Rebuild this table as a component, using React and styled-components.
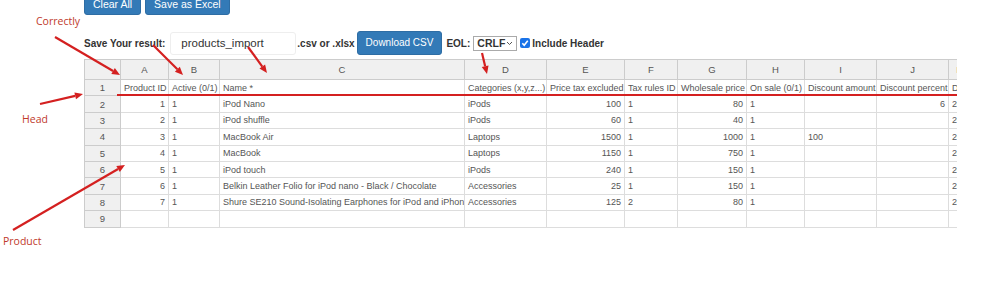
import React from 'react';
import styled, { createGlobalStyle } from 'styled-components';

const GlobalStyle = createGlobalStyle`
  html, body {
    margin: 0;
    padding: 0;
    background: #fff;
  }
  body {
    font-family: "Liberation Sans", Arial, sans-serif;
    color: #333;
  }
`;

const Page = styled.div`
  position: relative;
  width: 1000px;
  height: 293px;
  overflow: hidden;
`;

const Content = styled.div`
  display: flex;
  flex-direction: column;
  padding-left: 84px;
  margin-top: -7px;
`;

const TopBar = styled.div`
  display: flex;
  gap: 4px;
`;

const Button = styled.button`
  background: #337ab7;
  border: 1px solid #2e6da4;
  border-radius: 3px;
  color: #fff;
  font-family: "Liberation Sans", Arial, sans-serif;
  font-size: ${(p) => (p.$small ? '10px' : '10.5px')};
  height: ${(p) => (p.$small ? '24px' : '22px')};
  padding: 0 8px;
  line-height: 1;
  cursor: pointer;
`;

const SaveRow = styled.div`
  display: flex;
  align-items: center;
  margin-top: 16px;
  height: 24px;
  font-size: 10px;
  font-weight: bold;
  color: #333;
`;

const Label = styled.span`
  margin-right: ${(p) => p.$mr || 0}px;
  margin-left: ${(p) => p.$ml || 0}px;
  white-space: nowrap;
`;

const FileInput = styled.div`
  box-sizing: border-box;
  width: 126px;
  height: 23px;
  border: 1px solid #eee;
  border-radius: 3px;
  padding-left: 10px;
  display: flex;
  align-items: center;
  font-size: 11.5px;
  font-weight: normal;
  color: #333;
  margin: 0 1px 0 5px;
`;

const Select = styled.div`
  display: flex;
  align-items: center;
  justify-content: space-between;
  box-sizing: border-box;
  width: 44px;
  height: 15px;
  border: 1px solid #aaa;
  padding: 0 3px;
  margin: 0 3px;
  font-size: 10.5px;
  font-weight: bold;
`;

const Check = styled.span`
  width: 10px;
  height: 10px;
  border-radius: 2px;
  background: #1a73e8;
  display: inline-flex;
  align-items: center;
  justify-content: center;
  margin-right: 2px;
`;

const TableWrap = styled.div`
  margin-top: 4px;
  width: 873px;
  overflow: hidden;
`;

const Grid = styled.table`
  border-collapse: collapse;
  table-layout: fixed;
  font-size: 9px;
  color: #555;
  width: 886px;
`;

const ColHead = styled.th`
  height: 19px;
  background: #f0f0f0;
  border: 1px solid #ccc;
  font-weight: normal;
  font-size: 9.5px;
  text-align: center;
  padding: 0;
  overflow: hidden;
  white-space: nowrap;
`;

const Row = styled.tr`
  height: 16.4px;
`;

const RowHead = styled.td`
  background: #f0f0f0;
  border: 1px solid #ccc;
  text-align: center;
  font-size: 9.5px;
  padding: 0;
`;

const Cell = styled.td`
  border: 1px solid #ddd;
  padding: 0 3px;
  text-align: ${(p) => (p.$right ? 'right' : 'left')};
  white-space: nowrap;
  overflow: hidden;
`;

const Overlay = styled.svg`
  position: absolute;
  left: 0;
  top: 0;
  pointer-events: none;
`;

const Note = styled.span`
  position: absolute;
  left: ${(p) => p.$x}px;
  top: ${(p) => p.$y}px;
  font-family: "Open Sans", sans-serif;
  font-size: 10.5px;
  color: #c0392b;
`;

const widths = [36, 48, 51, 245, 82, 78, 53, 69, 58, 72, 72, 22];
const letters = ['A', 'B', 'C', 'D', 'E', 'F', 'G', 'H', 'I', 'J', 'K'];
const rightCols = [0, 4, 6, 9];

const rows = [
  ['Product ID', 'Active (0/1)', 'Name *', 'Categories (x,y,z...)', 'Price tax excluded', 'Tax rules ID', 'Wholesale price', 'On sale (0/1)', 'Discount amount', 'Discount percent', 'Discount from'],
  ['1', '1', 'iPod Nano', 'iPods', '100', '1', '80', '1', '', '6', '2015'],
  ['2', '1', 'iPod shuffle', 'iPods', '60', '1', '40', '1', '', '', '2015'],
  ['3', '1', 'MacBook Air', 'Laptops', '1500', '1', '1000', '1', '100', '', '2015'],
  ['4', '1', 'MacBook', 'Laptops', '1150', '1', '750', '1', '', '', '2015'],
  ['5', '1', 'iPod touch', 'iPods', '240', '1', '150', '1', '', '', '2015'],
  ['6', '1', 'Belkin Leather Folio for iPod nano - Black / Chocolate', 'Accessories', '25', '1', '150', '1', '', '', '2015'],
  ['7', '1', 'Shure SE210 Sound-Isolating Earphones for iPod and iPhone', 'Accessories', '125', '2', '80', '1', '', '', '2015'],
  ['', '', '', '', '', '', '', '', '', '', ''],
];

const arrows = [
  [55, 37, 120, 75],
  [153, 45, 183, 75],
  [248, 47, 267, 73],
  [482, 53, 487, 74],
  [40, 104, 83, 94],
  [13, 230, 125, 165],
];

function Arrow({ x1, y1, x2, y2 }) {
  const a = Math.atan2(y2 - y1, x2 - x1);
  const len = 8;
  const w = 3.5;
  const bx = x2 - len * Math.cos(a);
  const by = y2 - len * Math.sin(a);
  const px = -Math.sin(a) * w;
  const py = Math.cos(a) * w;
  return (
    <g>
      <line x1={x1} y1={y1} x2={bx} y2={by} stroke="#d42020" strokeWidth="2.2" />
      <polygon points={`${x2},${y2} ${bx + px},${by + py} ${bx - px},${by - py}`} fill="#d42020" />
    </g>
  );
}

export default function App() {
  return (
    <Page>
      <GlobalStyle />
      <Content>
        <TopBar>
          <Button>Clear All</Button>
          <Button>Save as Excel</Button>
        </TopBar>
        <SaveRow>
          <Label>Save Your result:</Label>
          <FileInput>products_import</FileInput>
          <Label $mr={2}>.csv or .xlsx</Label>
          <Button $small>Download CSV</Button>
          <Label $ml={4}>EOL:</Label>
          <Select>
            CRLF
            <svg width="7" height="5" viewBox="0 0 7 5">
              <polyline points="1,1 3.5,3.5 6,1" fill="none" stroke="#555" strokeWidth="1" />
            </svg>
          </Select>
          <Check>
            <svg width="8" height="8" viewBox="0 0 9 9">
              <polyline points="1.5,4.8 3.6,7 7.6,2" fill="none" stroke="#fff" strokeWidth="1.8" />
            </svg>
          </Check>
          <Label>Include Header</Label>
        </SaveRow>
        <TableWrap>
          <Grid>
            <colgroup>
              {widths.map((w, i) => (
                <col key={i} style={{ width: w }} />
              ))}
            </colgroup>
            <thead>
              <tr>
                <ColHead />
                {letters.map((l) => (
                  <ColHead key={l}>{l}</ColHead>
                ))}
              </tr>
            </thead>
            <tbody>
              {rows.map((r, i) => (
                <Row key={i}>
                  <RowHead>{i + 1}</RowHead>
                  {r.map((c, j) => (
                    <Cell key={j} $right={i > 0 && rightCols.includes(j)}>
                      {c}
                    </Cell>
                  ))}
                </Row>
              ))}
            </tbody>
          </Grid>
        </TableWrap>
      </Content>
      <Overlay width="1000" height="293">
        <line x1="117" y1="95" x2="957" y2="95" stroke="#d42020" strokeWidth="2" />
        {arrows.map(([x1, y1, x2, y2], i) => (
          <Arrow key={i} x1={x1} y1={y1} x2={x2} y2={y2} />
        ))}
      </Overlay>
      <Note $x={36} $y={14}>Correctly</Note>
      <Note $x={22} $y={112}>Head</Note>
      <Note $x={3} $y={234}>Product</Note>
    </Page>
  );
}
